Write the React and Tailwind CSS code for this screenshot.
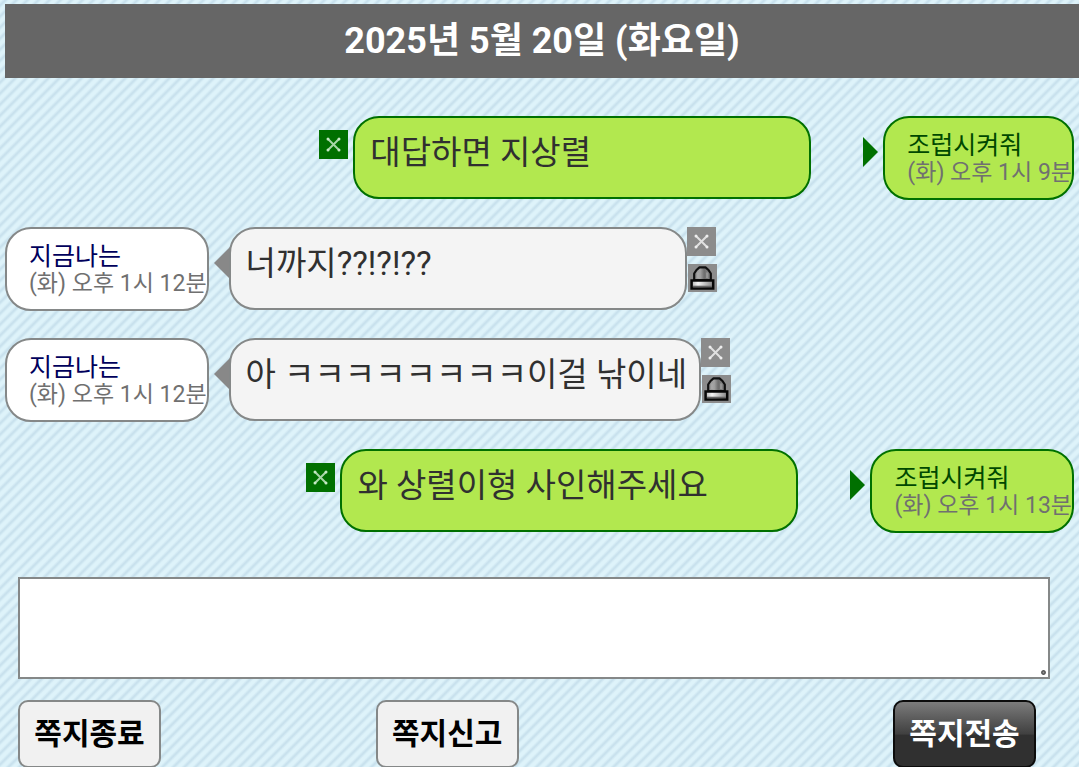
const MESSAGES = [
  { id: 1, mine: true, name: "조럽시켜줘", time: "(화) 오후 1시 9분", text: "대답하면 지상렬" },
  { id: 2, mine: false, name: "지금나는", time: "(화) 오후 1시 12분", text: "너까지??!?!??" },
  { id: 3, mine: false, name: "지금나는", time: "(화) 오후 1시 12분", text: "아 ㅋㅋㅋㅋㅋㅋㅋㅋ이걸 낚이네" },
  { id: 4, mine: true, name: "조럽시켜줘", time: "(화) 오후 1시 13분", text: "와 상렬이형 사인해주세요" },
];

function DeleteButton({ className }) {
  return (
    <button type="button" aria-label="삭제" className={`h-[29px] w-[29px] shrink-0 ${className}`}>
      <svg viewBox="0 0 29 29" className="block h-full w-full" aria-hidden="true">
        <path
          d="M9 9L20 20M20 9L9 20"
          fill="none"
          stroke="currentColor"
          strokeWidth="2"
          strokeLinecap="round"
          opacity="0.85"
        />
        <g fill="currentColor">
          <circle cx="9" cy="9" r="1.5" />
          <circle cx="20" cy="9" r="1.5" />
          <circle cx="9" cy="20" r="1.5" />
          <circle cx="20" cy="20" r="1.5" />
        </g>
      </svg>
    </button>
  );
}

function ReportButton() {
  return (
    <button type="button" aria-label="신고" className="ml-px h-7 w-[29px] shrink-0 bg-[#8c8c8c]">
      <svg viewBox="0 0 29 28" className="block h-full w-full" aria-hidden="true">
        <defs>
          <linearGradient id="siren" x1="0" x2="1" y1="0" y2="0">
            <stop offset="0" stopColor="#8c8c8c" />
            <stop offset="0.35" stopColor="#a4a4a4" />
            <stop offset="0.6" stopColor="#6e6e6e" />
            <stop offset="1" stopColor="#8a8a8a" />
          </linearGradient>
          <linearGradient id="sirenBase" x1="0" x2="1" y1="0" y2="0">
            <stop offset="0" stopColor="#b5b5b5" />
            <stop offset="0.3" stopColor="#f5f5f5" />
            <stop offset="1" stopColor="#858585" />
          </linearGradient>
        </defs>
        <path
          d="M6.2 16V9.5L8.5 6L11.5 3.4H17.5L20.5 6L22.8 9.5V16Z"
          fill="url(#siren)"
          stroke="#101010"
          strokeWidth="2.2"
          strokeLinejoin="round"
        />
        <path d="M10 8.5V14M19 8.5V14" stroke="#b0b0b0" strokeWidth="1" />
        <path d="M3.6 16.4H25.2V24.4H3.6Z" fill="url(#sirenBase)" stroke="#080808" strokeWidth="2.5" />
        <path d="M5 22.4H24" stroke="#666" strokeWidth="1.4" />
      </svg>
    </button>
  );
}

function NameTag({ message }) {
  const box = message.mine
    ? "border-[#007000] bg-[#b2e84f]"
    : "border-[#858888] bg-white";
  return (
    <div className={`h-[84px] shrink-0 rounded-[26px] border-2 pt-[14px] pl-[22px] whitespace-nowrap ${box}`}>
      <div className={`text-[25px] leading-7 ${message.mine ? "text-[#004800]" : "text-[#00005c]"}`}>
        {message.name}
      </div>
      <div className="text-[23px] leading-[26px] text-[#707070]">{message.time}</div>
    </div>
  );
}

function Bubble({ message }) {
  const box = message.mine
    ? "border-[#007000] bg-[#b2e84f]"
    : "border-[#858888] bg-[#f4f4f4]";
  return (
    <div
      className={`z-10 h-[83px] min-w-[458px] rounded-[26px] border-2 pt-[13px] pr-3 pl-[15px] text-[33px] leading-[44px] whitespace-nowrap text-[#303030] ${box}`}
    >
      {message.text}
    </div>
  );
}

function Message({ message }) {
  if (message.mine) {
    return (
      <li className="flex items-start justify-end">
        <DeleteButton className="mt-[14px] mr-[5px] bg-[#007000] text-[#c4e8c4]" />
        <Bubble message={message} />
        <svg viewBox="0 0 15 30" className="mt-[21px] mr-[5px] ml-[52px] h-[30px] w-[15px] shrink-0" aria-hidden="true">
          <path d="M0 0L15 15L0 30Z" fill="#007000" />
        </svg>
        <NameTag message={message} />
      </li>
    );
  }
  return (
    <li className="flex items-start">
      <NameTag message={message} />
      <svg viewBox="0 0 17 34" className="mt-[19px] -mr-[2px] ml-[5px] h-[34px] w-[17px] shrink-0" aria-hidden="true">
        <path d="M17 0L0 17L17 34Z" fill="#888888" />
      </svg>
      <Bubble message={message} />
      <div className="flex flex-col gap-2">
        <DeleteButton className="bg-[#8c8c8c] text-[#eeeeee]" />
        <ReportButton />
      </div>
    </li>
  );
}

export default function App() {
  return (
    <main className="min-h-screen bg-[linear-gradient(135deg,#def3fa_0%,#def3fa_8%,#c6dfec_25%,#def3fa_42%,#def3fa_58%,#c6dfec_75%,#def3fa_92%,#def3fa_100%)] bg-[length:11px_11px] pt-1 font-[Roboto,'Noto_Sans_CJK_KR',sans-serif]">
      <h1 className="ml-[5px] bg-[#666666] py-[13px] text-center text-[36px] leading-[48px] font-bold text-white">
        2025년 5월 20일 (화요일)
      </h1>

      <ul className="mt-[38px] flex flex-col gap-[27px] px-[5px]">
        {MESSAGES.map((message) => (
          <Message key={message.id} message={message} />
        ))}
      </ul>

      <form onSubmit={(e) => e.preventDefault()} className="mt-11">
        <div className="relative mr-[29px] ml-[18px]">
          <textarea
            aria-label="쪽지 내용"
            className="block h-[102px] w-full resize-none border-2 border-[#858888] bg-white p-3 text-[33px] outline-none"
          />
          <svg viewBox="0 0 6 6" className="absolute right-1 bottom-1 h-[5px] w-[5px]" aria-hidden="true">
            <circle cx="3" cy="3" r="2" fill="#999" stroke="#555" strokeWidth="1.8" />
          </svg>
        </div>

        <div className="mt-[21px] grid grid-cols-3 gap-3 pl-[18px] text-[30px] leading-10 font-bold">
          <button
            type="button"
            className="h-[68px] w-[143px] rounded-[10px] border-2 border-[#858888] bg-[#f1f1f1] text-black"
          >
            쪽지종료
          </button>
          <button
            type="button"
            className="h-[68px] w-[143px] rounded-[10px] border-2 border-[#858888] bg-[#f1f1f1] text-black"
          >
            쪽지신고
          </button>
          <button
            type="submit"
            className="mr-[43px] h-[68px] w-[143px] justify-self-end rounded-[10px] border-2 border-[#0c0c0c] bg-linear-to-b from-[#7c7c7c] from-0% via-[#404040] via-50% to-[#303030] to-52% text-white"
          >
            쪽지전송
          </button>
        </div>
      </form>
    </main>
  );
}
